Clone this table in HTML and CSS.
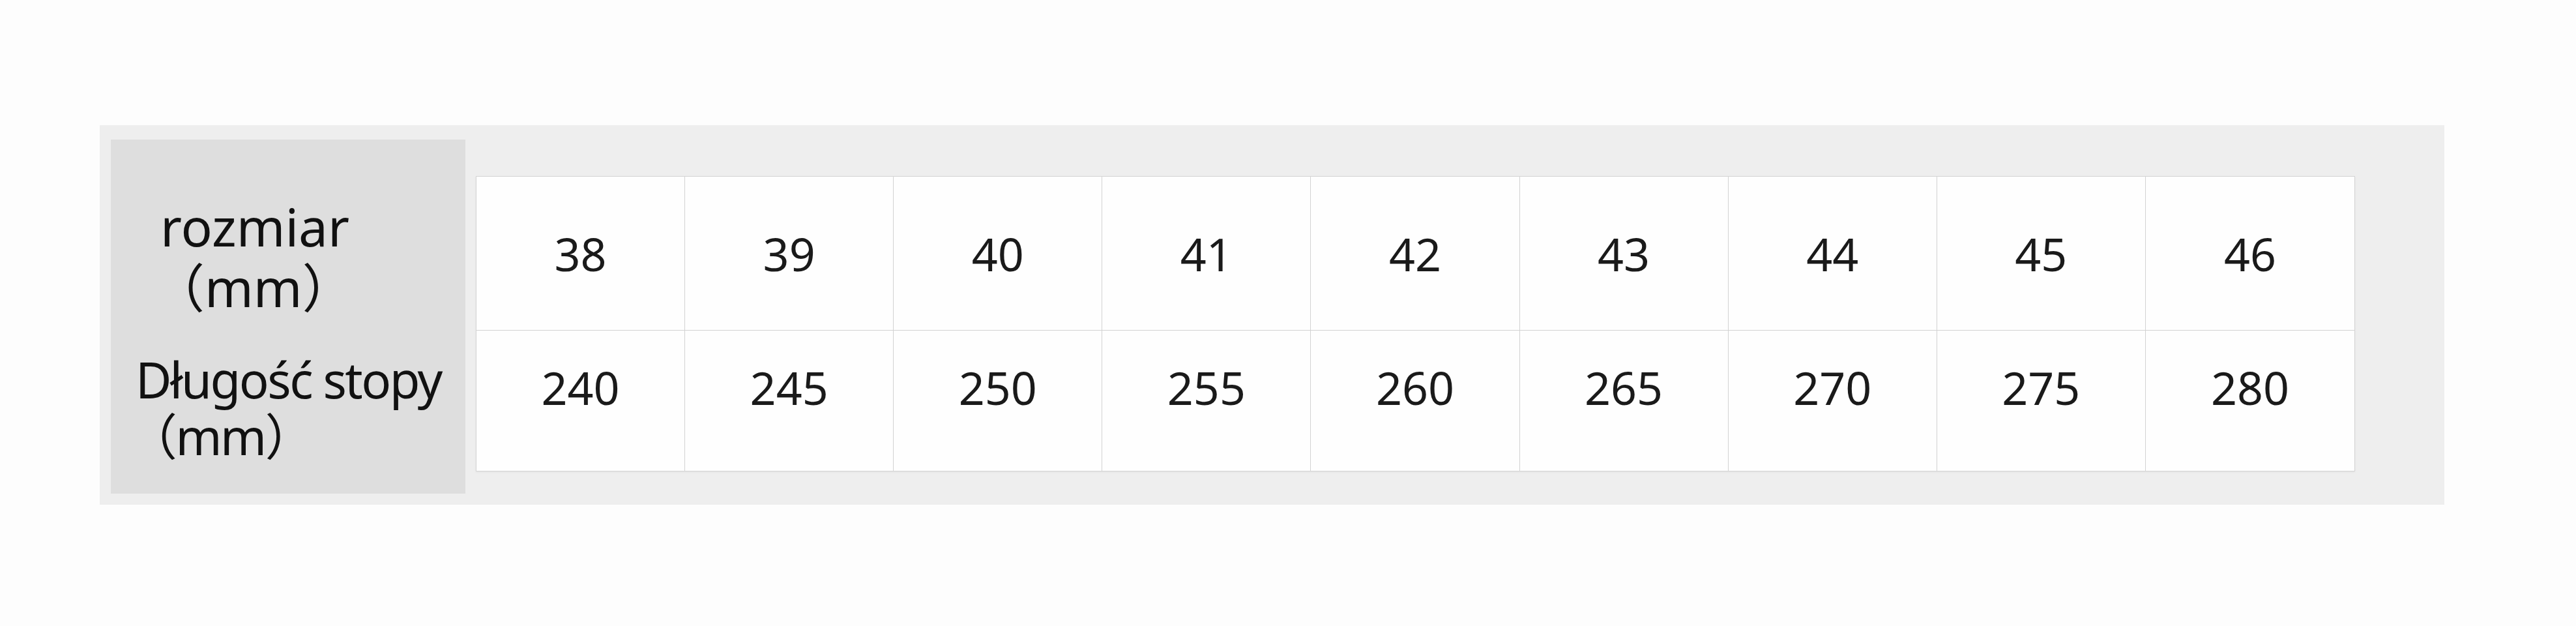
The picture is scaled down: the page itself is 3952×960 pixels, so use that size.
FILE: index.html
```html
<!DOCTYPE html>
<html lang="pl">
<head>
  <meta charset="UTF-8">
  <title>Tabela rozmiarów</title>
  <meta name="viewport" content="width=device-width, initial-scale=1">
  <link rel="stylesheet" href="styles.css">
</head>
<body>
  <div class="panel">
    <div class="labels">
      <div class="label label-size">
        <div>rozmiar</div>
        <div class="unit">（mm）</div>
      </div>
      <div class="label label-foot">
        <div>Długość stopy</div>
        <div class="unit">（mm）</div>
      </div>
    </div>

    <div class="grid">
      <div class="cell">38</div>
      <div class="cell">39</div>
      <div class="cell">40</div>
      <div class="cell">41</div>
      <div class="cell">42</div>
      <div class="cell">43</div>
      <div class="cell">44</div>
      <div class="cell">45</div>
      <div class="cell">46</div>

      <div class="cell low">240</div>
      <div class="cell low">245</div>
      <div class="cell low">250</div>
      <div class="cell low">255</div>
      <div class="cell low">260</div>
      <div class="cell low">265</div>
      <div class="cell low">270</div>
      <div class="cell low">275</div>
      <div class="cell low">280</div>
    </div>
  </div>
</body>
</html>
```

FILE: styles.css
```css
body {
  margin: 0;
  padding: 192px 0 0 153px;
  background-color: #fdfdfd;
  font-family: "Noto Sans", "Noto Sans CJK SC", sans-serif;
  color: #111;
}

.panel {
  display: flex;
  align-items: flex-start;
  width: 3597px;
  height: 582px;
  box-sizing: border-box;
  padding: 22px 0 0 17px;
  background-color: #eeeeee;
}

.labels {
  width: 544px;
  height: 543px;
  box-sizing: border-box;
  padding-top: 86px;
  background-color: #dedede;
  font-size: 80px;
  white-space: nowrap;
}

.label-size {
  padding-left: 76px;
  line-height: 93px;
}

.label-foot {
  margin-top: 52px;
  padding-left: 38px;
  font-size: 76px;
  letter-spacing: -2.5px;
  line-height: 87px;
}

.unit {
  margin-left: -12px;
}

.grid {
  display: grid;
  grid-template-columns: repeat(9, 1fr);
  grid-template-rows: 236px 215px;
  width: 2883px;
  margin: 56px 0 0 16px;
  background-color: #fefefe;
  border: 1px solid #d4d4d4;
  box-sizing: border-box;
  box-shadow: 0 1px 3px rgba(0,0,0,0.06);
}

.cell {
  display: flex;
  align-items: center;
  justify-content: center;
  font-size: 70px;
  color: #1a1a1a;
  border-right: 1px solid #d2d2d2;
  border-bottom: 1px solid #d2d2d2;
}

.cell:nth-child(9n) {
  border-right: none;
}

.cell.low {
  border-bottom: none;
  padding-bottom: 42px;
}
```
